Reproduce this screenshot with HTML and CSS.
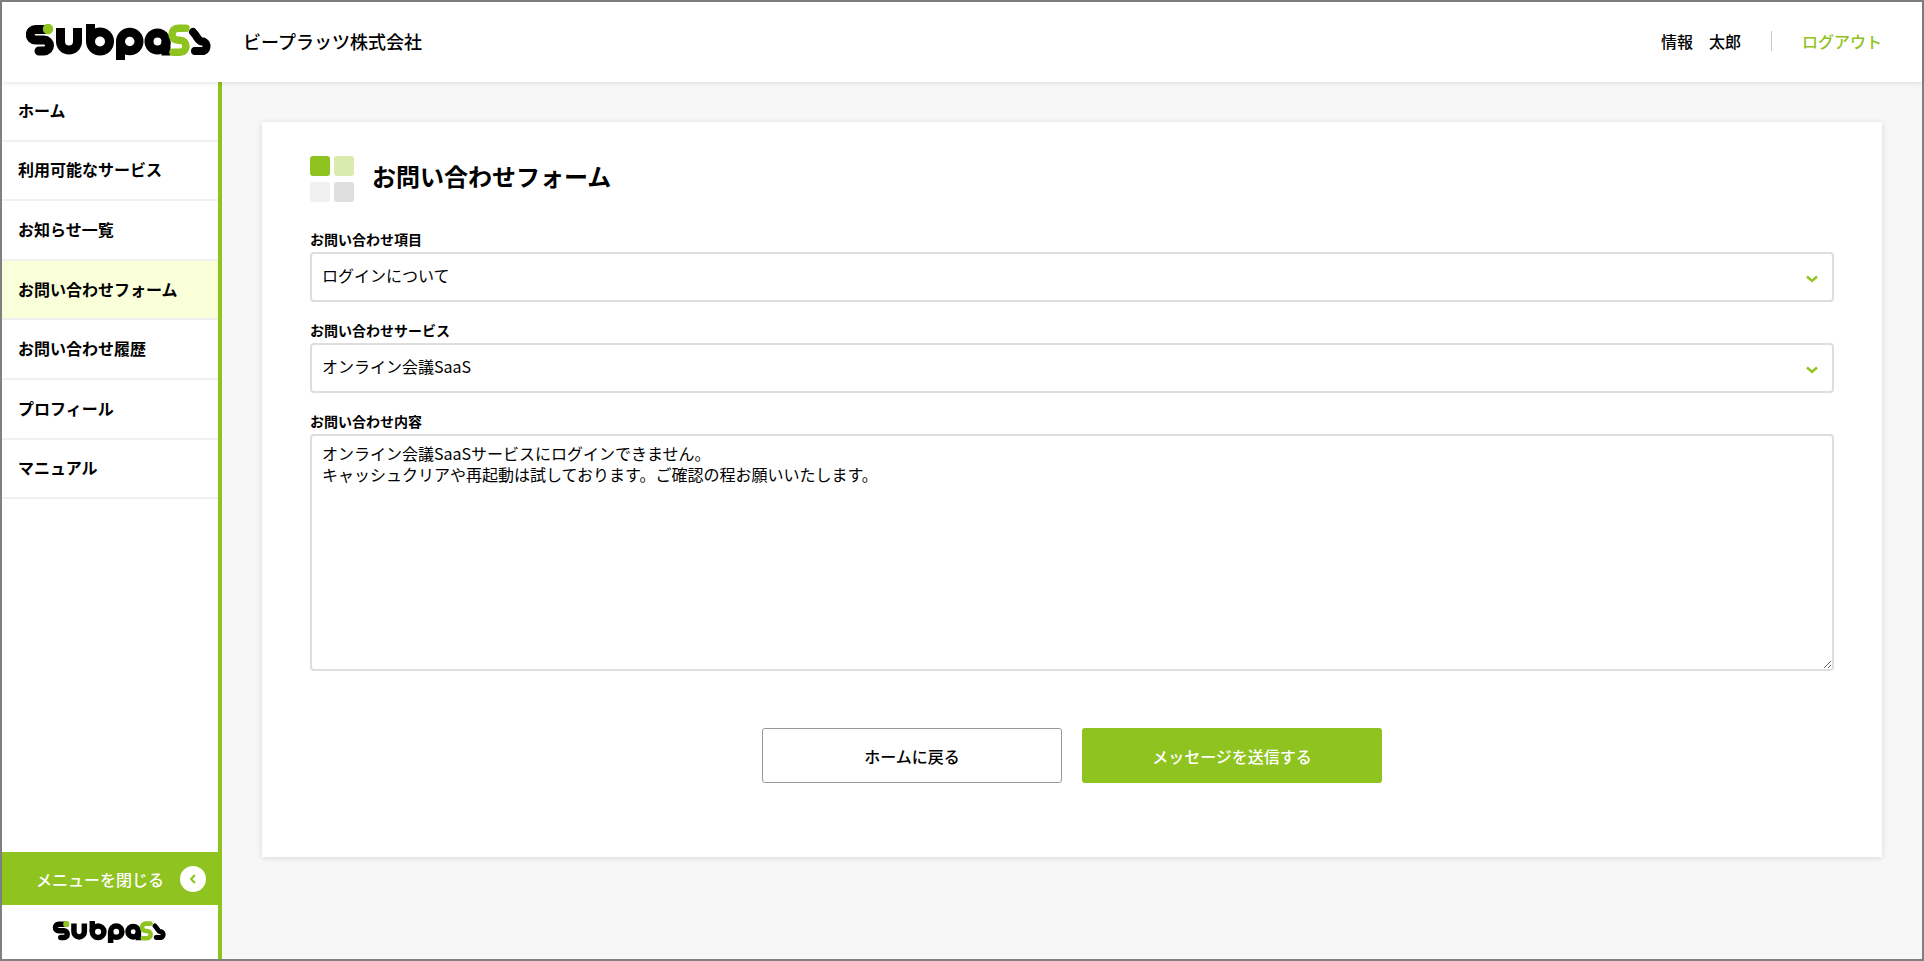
FILE: index.html
```html
<!DOCTYPE html>
<html lang="ja">
<head>
<meta charset="utf-8">
<title>お問い合わせフォーム</title>
<link rel="stylesheet" href="styles.css">
</head>
<body>
<svg class="defs" width="0" height="0" aria-hidden="true">
  <symbol id="logo" viewBox="0 0 187 36">
    <g fill="none" stroke="#000" stroke-width="9">
      <path d="M20 5.500H9.500A5.250 5.250 0 0 0 9.500 16H18A5.500 5.500 0 0 1 18 27H13" stroke-linecap="round"/>
      <path d="M34.500 4V17.500A8.500 8.500 0 0 0 51.500 17.500V4"/>
      <path d="M64.500 0V17.500"/>
      <circle cx="74" cy="17.500" r="9.500"/>
      <path d="M94.500 17.500V36"/>
      <circle cx="103.750" cy="17.500" r="9.250"/>
      <circle cx="131.500" cy="17.500" r="8.500"/>
      <path d="M140 17.500V31.500"/>
      <path d="M167 8C172 13 172 17.500 176 17.500H177.500A5.250 5.250 0 0 1 177.500 27H169" stroke-width="8" stroke-linecap="round"/>
    </g>
    <circle cx="22" cy="5" r="5.200" fill="#8fc31f"/>
    <path d="M160 4.250H152A6 6 0 0 0 152 16.250H154A6 6 0 0 1 154 28.250H147" fill="none" stroke="#8fc31f" stroke-width="7.500" stroke-linecap="round"/>
  </symbol>
</svg>
<div class="frame">
  <header class="header">
    <svg class="logo-main"><use href="#logo"/></svg>
    <span class="company">ビープラッツ株式会社</span>
    <div class="account">
      <span class="user">情報　太郎</span>
      <a class="logout" href="#">ログアウト</a>
    </div>
  </header>
  <div class="body">
    <aside class="sidebar">
      <nav class="menu">
        <a class="menu-item" href="#">ホーム</a>
        <a class="menu-item" href="#">利用可能なサービス</a>
        <a class="menu-item" href="#">お知らせ一覧</a>
        <a class="menu-item active" href="#">お問い合わせフォーム</a>
        <a class="menu-item" href="#">お問い合わせ履歴</a>
        <a class="menu-item" href="#">プロフィール</a>
        <a class="menu-item" href="#">マニュアル</a>
      </nav>
      <button class="close-menu" type="button">
        <span>メニューを閉じる</span>
        <span class="close-dot">
          <svg width="8" height="10" viewBox="0 0 8 10"><path d="M6 1 2 5l4 4" fill="none" stroke="#8fc31f" stroke-width="2"/></svg>
        </span>
      </button>
      <div class="side-logo"><svg class="logo-small"><use href="#logo"/></svg></div>
    </aside>
    <main class="main">
      <section class="card">
        <div class="title-row">
          <div class="title-icon">
            <i class="sq sq1"></i><i class="sq sq2"></i><i class="sq sq3"></i><i class="sq sq4"></i>
          </div>
          <h1 class="title">お問い合わせフォーム</h1>
        </div>
        <div class="field">
          <label class="label">お問い合わせ項目</label>
          <div class="select"><span>ログインについて</span>
            <svg class="chev" width="12" height="8" viewBox="0 0 12 8"><path d="M1 1.500 6 6l5-4.500" fill="none" stroke="#8fc31f" stroke-width="2.400"/></svg>
          </div>
        </div>
        <div class="field">
          <label class="label">お問い合わせサービス</label>
          <div class="select"><span>オンライン会議SaaS</span>
            <svg class="chev" width="12" height="8" viewBox="0 0 12 8"><path d="M1 1.500 6 6l5-4.500" fill="none" stroke="#8fc31f" stroke-width="2.400"/></svg>
          </div>
        </div>
        <div class="field">
          <label class="label">お問い合わせ内容</label>
          <textarea class="textarea">オンライン会議SaaSサービスにログインできません。
キャッシュクリアや再起動は試しております。ご確認の程お願いいたします。</textarea>
        </div>
        <div class="actions">
          <button class="btn btn-back" type="button">ホームに戻る</button>
          <button class="btn btn-send" type="button">メッセージを送信する</button>
        </div>
      </section>
    </main>
  </div>
</div>
</body>
</html>
```
FILE: styles.css
```css
* { box-sizing: border-box; }
html, body { margin: 0; height: 100%; }
body {
  font-family: "Noto Sans CJK JP", "Noto Sans", sans-serif;
  color: #000;
  background: #fff;
  overflow: hidden;
}
.defs { position: absolute; }
.frame {
  height: 961px;
  border: 2px solid #808080;
  display: flex;
  flex-direction: column;
}
.header {
  height: 80px;
  flex: none;
  display: flex;
  align-items: center;
  padding: 0 40px 0 24px;
  background: #fff;
  box-shadow: 0 1px 5px rgba(0,0,0,.12);
  position: relative;
  z-index: 2;
}
.logo-main { width: 187px; height: 36px; flex: none; }
.company { margin-left: 30px; font-size: 18px; font-weight: 500; padding-bottom: 2px; }
.account { margin-left: auto; display: flex; align-items: center; font-size: 16px; padding-bottom: 2px; }
.user { font-weight: 500; padding-right: 30px; border-right: 1px solid #c9c9b8; line-height: 20px; }
.logout { color: #8fc31f; text-decoration: none; margin-left: 30px; font-weight: 500; line-height: 20px; }
.body { flex: 1; display: flex; min-height: 0; }
.sidebar {
  width: 220px;
  flex: none;
  background: #fff;
  border-right: 4px solid #8fc31f;
  display: flex;
  flex-direction: column;
}
.menu { flex: 1; display: flex; flex-direction: column; }
.menu-item {
  height: 59.6px;
  display: flex;
  align-items: center;
  padding-left: 16px;
  padding-bottom: 2px;
  font-size: 16px;
  font-weight: 700;
  color: #000;
  text-decoration: none;
  border-bottom: 2px solid #f0f0f0;
}
.menu-item.active { background: #f9ffd8; }
.close-menu {
  height: 53px;
  flex: none;
  border: 0;
  background: #8fc31f;
  color: #fff;
  font: 500 16px "Noto Sans CJK JP", sans-serif;
  display: flex;
  align-items: center;
  justify-content: flex-end;
  padding: 0 12px 0 0;
  gap: 16px;
}
.close-dot {
  width: 26px; height: 26px;
  border-radius: 50%;
  background: #fff;
  display: flex; align-items: center; justify-content: center;
}
.side-logo { height: 54px; flex: none; display: flex; align-items: center; justify-content: center; }
.logo-small { width: 116px; height: 22px; }
.main { flex: 1; background: #f7f7f7; padding: 40px; min-width: 0; }
.card {
  background: #fff;
  height: 735px;
  padding: 34px 48px 0;
  box-shadow: 0 1px 6px rgba(0,0,0,.13);
}
.title-row { display: flex; align-items: center; height: 46px; margin-bottom: 28px; }
.title-icon {
  width: 44px; height: 46px;
  display: grid;
  grid-template-columns: 20px 20px;
  grid-template-rows: 20px 20px;
  gap: 6px 4px;
  flex: none;
}
.sq { border-radius: 3px; display: block; }
.sq1 { background: #8fc31f; }
.sq2 { background: #d9ebae; }
.sq3 { background: #f1f1f1; }
.sq4 { background: #dedede; }
.title { margin: 0 0 6px 18px; font-size: 24px; font-weight: 700; line-height: 1; }
.field { margin-bottom: 19px; }
.label { display: block; font-size: 14px; font-weight: 700; line-height: 18px; padding-bottom: 4px; }
.select {
  height: 50px;
  border: 2px solid #dedede;
  border-radius: 4px;
  display: flex;
  align-items: center;
  justify-content: space-between;
  padding: 0 14px 4px 10px;
  font-size: 16px;
}
.chev { margin-top: 8px; }
.textarea {
  display: block;
  width: 100%;
  height: 237px;
  border: 2px solid #dedede;
  border-radius: 4px;
  padding: 7px 10px;
  font: 16px/21px "Noto Sans CJK JP", sans-serif;
  color: #000;
  outline: 0;
  resize: vertical;
}
.actions { display: flex; justify-content: center; gap: 20px; margin-top: 57px; }
.btn {
  width: 300px;
  height: 55px;
  border-radius: 3px;
  font: 500 16px "Noto Sans CJK JP", sans-serif;
}
.btn-back { background: #fff; border: 1px solid #999; color: #000; }
.btn-send { background: #8fc31f; border: 0; color: #fff; }
```
